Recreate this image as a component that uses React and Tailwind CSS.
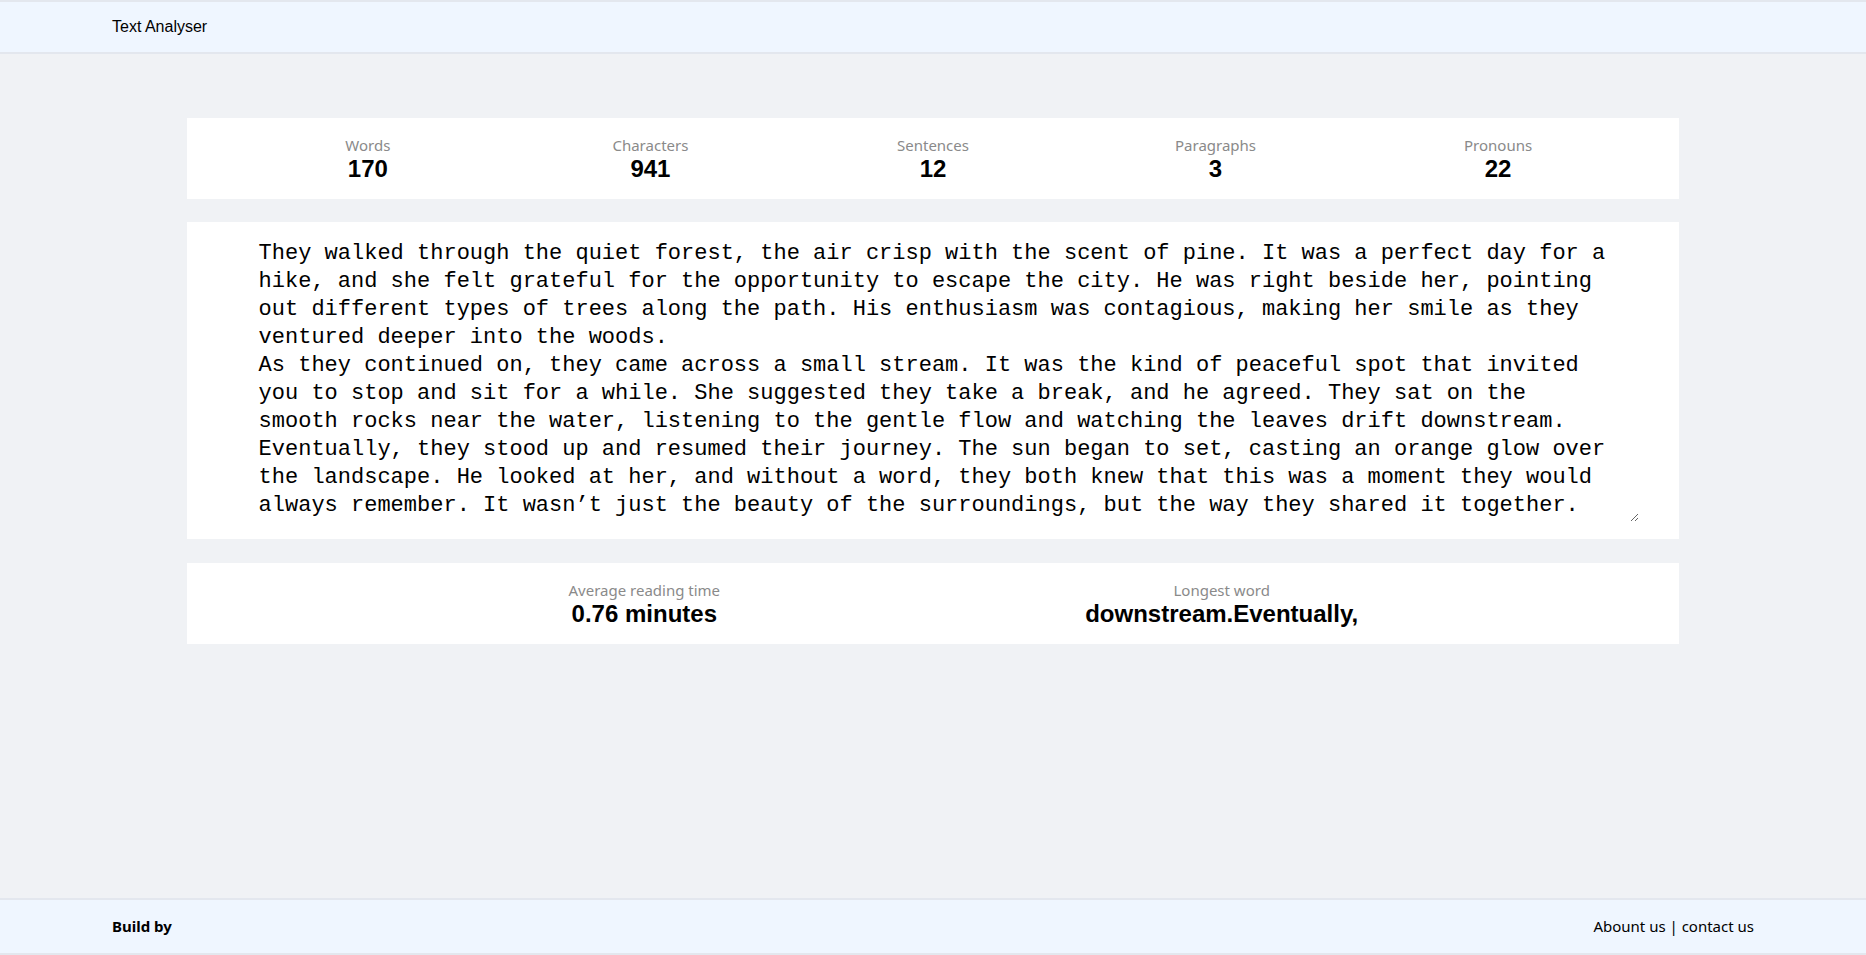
import React, { useState } from 'react';

const initialText =
  'They walked through the quiet forest, the air crisp with the scent of pine. It was a perfect day for a hike, and she felt grateful for the opportunity to escape the city. He was right beside her, pointing out different types of trees along the path. His enthusiasm was contagious, making her smile as they ventured deeper into the woods.\n' +
  'As they continued on, they came across a small stream. It was the kind of peaceful spot that invited you to stop and sit for a while. She suggested they take a break, and he agreed. They sat on the smooth rocks near the water, listening to the gentle flow and watching the leaves drift downstream.\n' +
  'Eventually, they stood up and resumed their journey. The sun began to set, casting an orange glow over the landscape. He looked at her, and without a word, they both knew that this was a moment they would always remember. It wasn\u2019t just the beauty of the surroundings, but the way they shared it together.';

const PRONOUNS = ['i', 'me', 'we', 'us', 'he', 'him', 'she', 'her', 'it', 'they', 'them'];

function analyse(text) {
  // words are split on plain spaces, as the original counter does
  const words = text.split(' ').filter(Boolean);
  const sentences = text.split(/[.!?]+/).filter((s) => s.trim().length > 0);
  const paragraphs = text.split('\n').filter((p) => p.trim().length > 0);
  const pronouns = text
    .split(/\s+/)
    .filter((w) => PRONOUNS.includes(w.toLowerCase().replace(/[^a-z]/g, '')));
  const longest = words
    .reduce((a, b) => (b.length > a.length ? b : a), '')
    .replace(/\n/g, '');
  return {
    words: words.length,
    characters: text.length,
    sentences: sentences.length,
    paragraphs: paragraphs.length,
    pronouns: pronouns.length,
    reading: (words.length / 225).toFixed(2),
    longest,
  };
}

function Stat({ label, value }) {
  return (
    <div className="flex flex-col items-center">
      <span className="text-[15px] leading-5 text-[#8a8a8a] font-['Noto_Sans',sans-serif]">{label}</span>
      <span className="text-[24px] leading-7 font-bold text-black font-['Liberation_Sans',Arial,sans-serif]">{value}</span>
    </div>
  );
}

export default function App() {
  const [text, setText] = useState(initialText);
  const stats = analyse(text);

  return (
    <div className="min-h-screen flex flex-col bg-[#f0f2f5]">
      {/* Header */}
      <header className="h-[54px] flex items-center px-[112px] bg-[#eff6ff] border-y-2 border-[#e3e7ee]">
        <span className="text-[16px] text-black font-['Liberation_Sans',Arial,sans-serif]">Text Analyser</span>
      </header>

      <main className="flex-1 pt-16 flex flex-col items-center">
        <div className="w-[80%] mb-[23px] bg-white grid grid-cols-5 px-10 pt-[17px] pb-4">
          <Stat label="Words" value={stats.words} />
          <Stat label="Characters" value={stats.characters} />
          <Stat label="Sentences" value={stats.sentences} />
          <Stat label="Paragraphs" value={stats.paragraphs} />
          <Stat label="Pronouns" value={stats.pronouns} />
        </div>

        <div className="w-[80%] mb-6 bg-white px-10 pt-[18px] pb-[17px]">
          <textarea
            value={text}
            onChange={(e) => setText(e.target.value)}
            className="block w-full h-[282px] pl-8 pr-[27px] overflow-hidden outline-none text-[22px] leading-[28px] text-black font-['Liberation_Mono','Courier_New',monospace]"
          />
        </div>

        <div className="w-[80%] bg-white grid grid-cols-2 px-[169px] pt-[17px] pb-4">
          <Stat label="Average reading time" value={`${stats.reading} minutes`} />
          <Stat label="Longest word" value={stats.longest} />
        </div>
      </main>

      {/* Footer */}
      <footer className="h-[57px] flex items-center justify-between px-[112px] bg-[#eff6ff] border-y-2 border-[#e3e7ee] font-['Noto_Sans',sans-serif] text-[15px] text-black">
        <span className="font-bold">Build by</span>
        <span>Abount us | contact us</span>
      </footer>
    </div>
  );
}
